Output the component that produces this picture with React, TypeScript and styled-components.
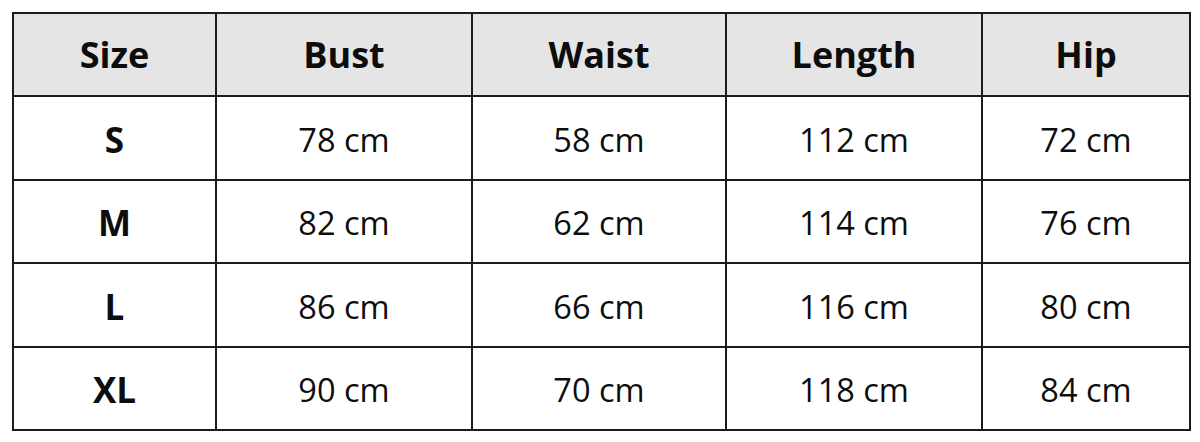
import React from "react";
import styled, { createGlobalStyle } from "styled-components";

const GlobalStyle = createGlobalStyle`
  html, body {
    margin: 0;
    padding: 0;
    background: #ffffff;
  }
  body {
    font-family: "Open Sans", "Noto Sans", "Liberation Sans", sans-serif;
    color: #111111;
  }
`;

const Page = styled.div`
  width: 1200px;
  height: 442px;
  padding: 12px 0 0 12px;
  box-sizing: border-box;
`;

const Table = styled.table`
  width: 1177px;
  border-collapse: collapse;
  table-layout: fixed;
  border: 2px solid #1c1c1c;
`;

const Row = styled.tr<{ $h: number }>`
  height: ${(p) => p.$h}px;
`;

const HeadCell = styled.th`
  padding: 0;
  background: #e5e5e6;
  border: 2px solid #1c1c1c;
  font-size: 36px;
  font-weight: 700;
  text-align: center;
  vertical-align: middle;
  color: #0d0d0d;
`;

const Cell = styled.td<{ $bold?: boolean }>`
  padding: 3px 0 0;
  border: 2px solid #1c1c1c;
  font-size: ${(p) => (p.$bold ? "35px" : "32.5px")};
  font-weight: ${(p) => (p.$bold ? 700 : 400)};
  text-align: center;
  vertical-align: middle;
  color: #0d0d0d;
`;

const columns = [
  { name: "Size", width: 203 },
  { name: "Bust", width: 256 },
  { name: "Waist", width: 254 },
  { name: "Length", width: 256 },
  { name: "Hip", width: 208 },
];

const rows = [
  ["S", "78 cm", "58 cm", "112 cm", "72 cm"],
  ["M", "82 cm", "62 cm", "114 cm", "76 cm"],
  ["L", "86 cm", "66 cm", "116 cm", "80 cm"],
  ["XL", "90 cm", "70 cm", "118 cm", "84 cm"],
];

export default function App() {
  return (
    <>
      <GlobalStyle />
      <Page>
        <Table>
          <colgroup>
            {columns.map((c) => (
              <col key={c.name} style={{ width: c.width }} />
            ))}
          </colgroup>
          <thead>
            <Row $h={83}>
              {columns.map((c) => (
                <HeadCell key={c.name}>{c.name}</HeadCell>
              ))}
            </Row>
          </thead>
          <tbody>
            {rows.map((r) => (
              <Row key={r[0]} $h={83.5}>
                {r.map((v, i) => (
                  <Cell key={i} $bold={i === 0}>
                    {v}
                  </Cell>
                ))}
              </Row>
            ))}
          </tbody>
        </Table>
      </Page>
    </>
  );
}
